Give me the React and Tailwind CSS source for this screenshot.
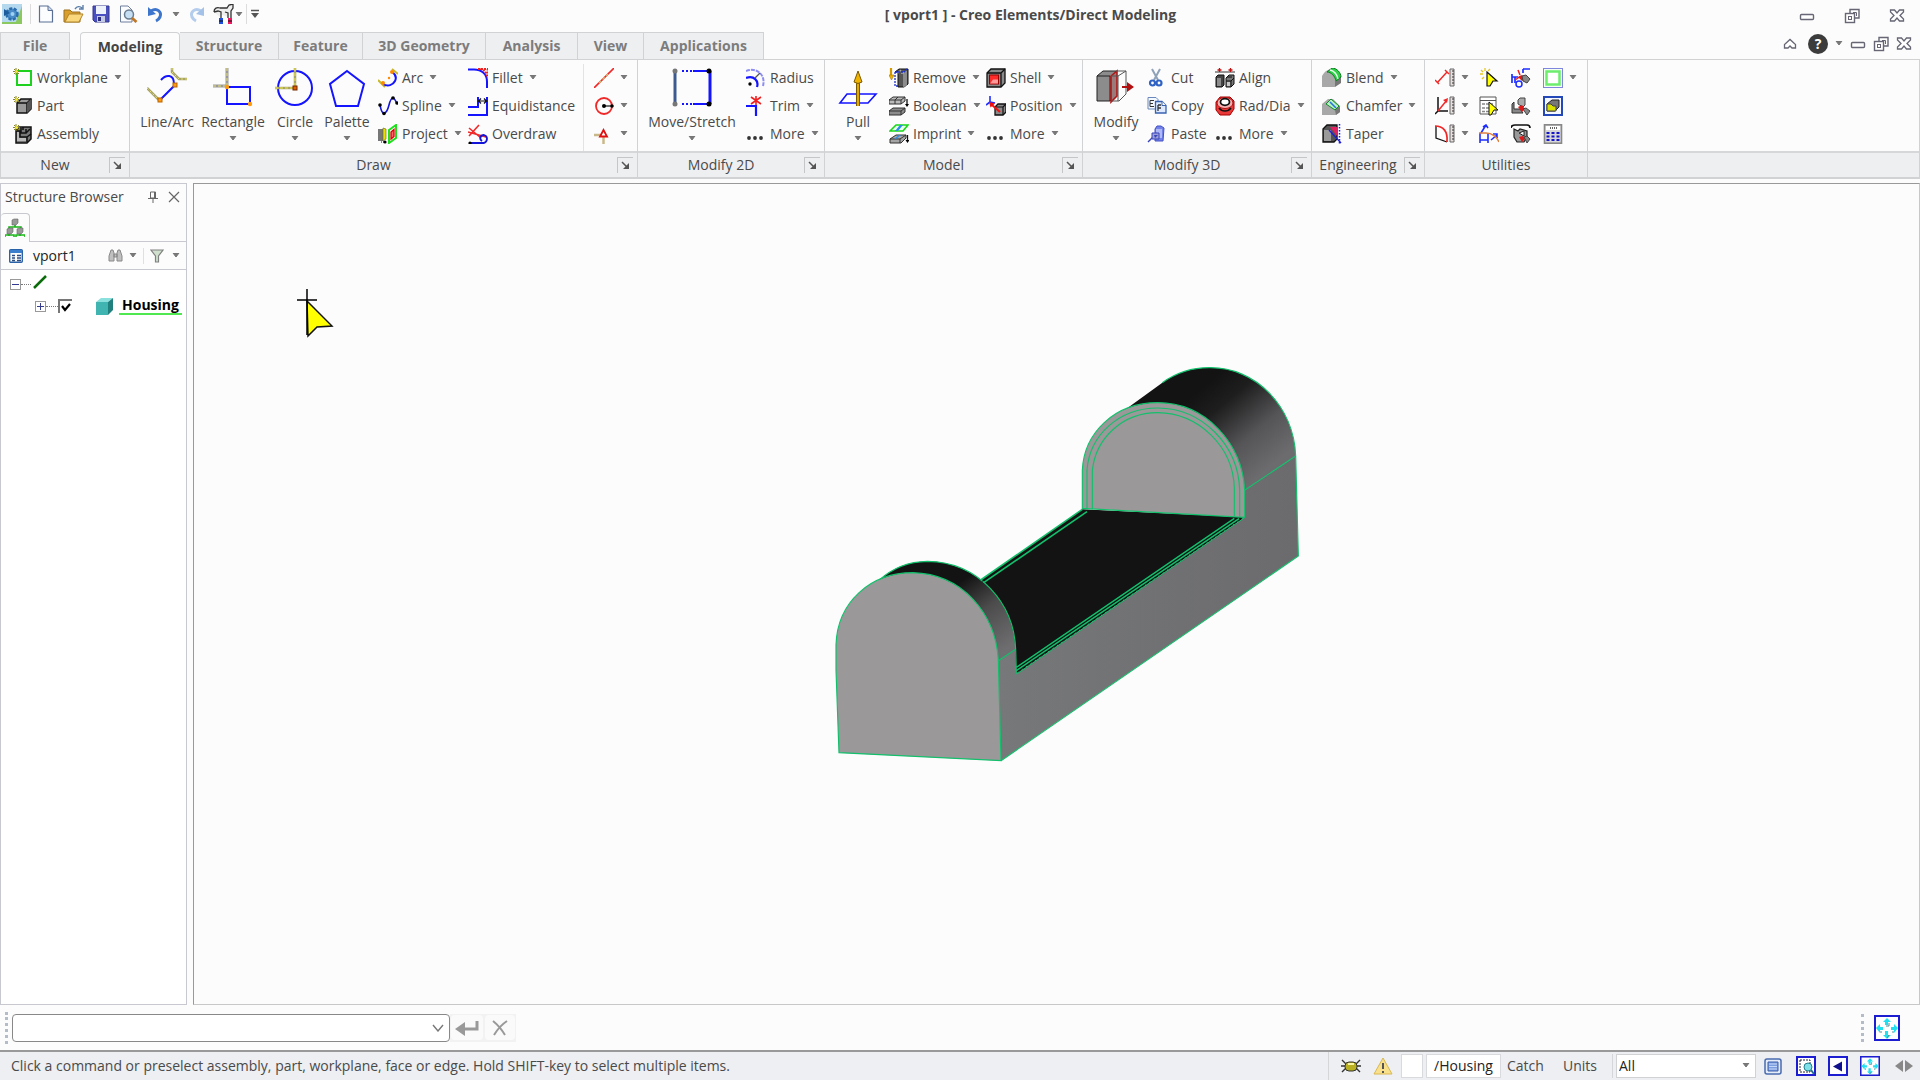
import { useState } from 'react';

// Small 20x20 ribbon drawings
const icons = {
  workplane: (
    <>
      <rect x="4" y="3" width="14" height="14" fill="none" stroke="#1fd11f" strokeWidth="2" />
      <path d="M3 0v7M0 3.5h7M1 1l5 5M6 1L1 6" stroke="#8a8420" strokeWidth="1" />
      <circle cx="3.5" cy="3.5" r="1.5" fill="#f2e93a" />
    </>
  ),
  part: (
    <>
      <path d="M4 7l4-4h10v10l-4 4H4z" fill="#9a9a9a" stroke="#111" strokeWidth="1.5" />
      <path d="M4 7h10v10M14 7l4-4" fill="none" stroke="#111" strokeWidth="1.5" />
      <path d="M14 7l4-4v10l-4 4z" fill="#555" />
      <path d="M3 0v7M0 3.5h7M1 1l5 5M6 1L1 6" stroke="#8a8420" strokeWidth="1" />
      <circle cx="3.5" cy="3.5" r="1.5" fill="#f2e93a" />
    </>
  ),
  assembly: (
    <>
      <path d="M3 6l3-3h12v12l-4 4H3z" fill="#777" stroke="#111" strokeWidth="1.5" />
      <path d="M3 7h4v6h7v5M8 4v5h5V5M13 9l4-4M14 13l4-3M10 3v3" fill="none" stroke="#111" strokeWidth="1.5" />
      <path d="M4 8h2v6h7v3H4z" fill="#bbb" />
      <path d="M3 0v7M0 3.5h7M1 1l5 5M6 1L1 6" stroke="#8a8420" strokeWidth="1" />
      <circle cx="3.5" cy="3.5" r="1.5" fill="#f2e93a" />
    </>
  ),
  arc: (
    <>
      <path d="M0 12l7 7M14 1l6 5" stroke="#c9b72c" strokeWidth="2" />
      <path d="M5 16c5 3 10 1 12-3s0-7-3-9" fill="none" stroke="#1414ff" strokeWidth="2" />
      <circle cx="5" cy="15" r="2" fill="#ff8a00" />
      <circle cx="14" cy="4" r="2" fill="#ff8a00" />
      <circle cx="11" cy="10" r="1.2" fill="#ff8a00" />
    </>
  ),
  spline: (
    <>
      <path d="M2 9c1 4 1 8 4 8s4-4 5-8 2-7 4-7 2 3 4 5" fill="none" stroke="#1414d8" strokeWidth="1.6" />
      <circle cx="2" cy="9" r="1.8" />
      <circle cx="6" cy="17.5" r="1.8" />
      <circle cx="15" cy="2" r="1.8" />
      <circle cx="19" cy="7" r="1.8" />
    </>
  ),
  project: (
    <>
      <path d="M0 5h5v12H0z" fill="#777" />
      <path d="M5 4l3 1v10l-3 2z" fill="#e8e000" stroke="#6b6700" strokeWidth=".6" />
      <path d="M11 6l7-5v13l-7 5z" fill="#fff" stroke="#1fe01f" strokeWidth="2" />
      <path d="M13 8l3-2.5v7L13 15z" fill="#f66" stroke="#d00" strokeWidth="1.3" />
      <path d="M3 18h6" stroke="#111" strokeDasharray="1 1" />
      <circle cx="7" cy="18" r="1.6" />
    </>
  ),
  fillet: (
    <>
      <path d="M0 1.5h6c8 0 13 5 13 12V20" fill="none" stroke="#1414ff" strokeWidth="2" />
      <path d="M10 1h9.500v9M12 1c4 1 6 3 7 7" fill="none" stroke="#f02020" strokeWidth="1.8" strokeDasharray="2 1" />
    </>
  ),
  equidistance: (
    <>
      <path d="M0 11h10V1M0 19h19V1" fill="none" stroke="#1414ff" strokeWidth="2" />
      <path d="M11 5h7M13 2.5l-2.5 2.5 2.5 2.5M16 2.5l2.5 2.5-2.5 2.5" fill="none" stroke="#111" strokeWidth="1.2" />
    </>
  ),
  overdraw: (
    <>
      <path d="M0 8l18 5M1 4l12 10M1 12L11 1" stroke="#f02828" strokeWidth="1.6" />
      <path d="M2 19h14c4-2 4-7 0-8-4 0-5 4-2 6" fill="none" stroke="#1414d8" strokeWidth="1.8" />
      <circle cx="2" cy="19" r="1.6" />
    </>
  ),
  geoLine: (
    <>
      <path d="M0 20L20 0" stroke="#f02828" strokeWidth="1.6" />
      <path d="M5 15L14 6" stroke="#d8b070" strokeWidth="1.6" strokeDasharray="3 2" />
    </>
  ),
  geoCircle: (
    <>
      <circle cx="10" cy="10" r="8" fill="none" stroke="#f02828" strokeWidth="1.8" />
      <path d="M10 10h8" stroke="#111" strokeWidth="1.2" />
      <circle cx="10" cy="10" r="2" />
      <circle cx="18" cy="10" r="1.8" />
    </>
  ),
  geoPoint: (
    <>
      <path d="M0 11h9M9.5 12v8" stroke="#c9b98a" strokeWidth="2.5" />
      <path d="M9.500 6l3.500 6.500H6z" fill="#fff" stroke="#e01010" strokeWidth="1.8" />
    </>
  ),
  radius: (
    <>
      <path d="M0 3C10-1 20 6 17 18" fill="none" stroke="#8c8cf4" strokeWidth="2" strokeDasharray="4 1" />
      <path d="M0 10c8-3 13 3 11 9" fill="none" stroke="#1414ff" strokeWidth="2.2" />
      <path d="M9 10l5-5" stroke="#555" strokeWidth="1.2" />
      <circle cx="4" cy="16" r="1.7" />
    </>
  ),
  trim: (
    <>
      <path d="M0 10h10v10" fill="none" stroke="#1414ff" strokeWidth="2.2" />
      <path d="M10 0v9M5 1l10 7M15 1L5 8" stroke="#f02020" strokeWidth="1.6" />
    </>
  ),
  more: (
    <>
      <circle cx="3" cy="14" r="1.9" fill="#333" />
      <circle cx="9" cy="14" r="1.9" fill="#333" />
      <circle cx="15" cy="14" r="1.9" fill="#333" />
    </>
  ),
  remove: (
    <>
      <path d="M6 4l4-3h9v15l-4 3H9V4z" fill="#555" stroke="#111" />
      <path d="M9 5l3-3M12 5h3v14M17 3v15" stroke="#aaa" strokeWidth="1.3" fill="none" />
      <path d="M6 4h9l3-3M6 4v14h4" fill="none" stroke="#1a2ec8" strokeWidth="1.3" strokeDasharray="2 1" />
      <path d="M2 0v9" stroke="#d39a00" strokeWidth="2.2" />
      <path d="M0 7h5l-2.5 5z" fill="#f0b400" stroke="#a87500" strokeWidth=".6" />
    </>
  ),
  boolean: (
    <>
      <path d="M0 4l4-3h12v4l-4 3H0z" fill="#bbb" stroke="#333" />
      <path d="M0 4h12l4-3M6 8V4l3-3M12 4v4" fill="none" stroke="#333" />
      <path d="M0 15l4-3h12v4l-4 3H0z" fill="#8c8c8c" stroke="#333" />
      <path d="M0 15h12l4-3M12 15v4" fill="none" stroke="#333" />
      <path d="M18 3v6" stroke="#111" strokeWidth="1.3" />
      <path d="M16 8h4l-2 3z" />
    </>
  ),
  imprint: (
    <>
      <path d="M1 7l6-6h12l-5 6z" fill="#eaffea" stroke="#19d819" strokeWidth="1.6" />
      <path d="M6 7l5-6h3L9 7z" fill="#2a8cf0" />
      <path d="M1 15l6-4h10v3l-5 5H1z" fill="#a5a5a5" stroke="#333" />
      <path d="M1 15h10l6-4M11 15v4" fill="none" stroke="#333" />
      <path d="M5 15l5-4h2l-5 4z" fill="#2a8cf0" />
      <path d="M18.5 11v6" stroke="#111" strokeWidth="1.3" />
      <path d="M16.5 16h4l-2 3z" />
    </>
  ),
  shell: (
    <>
      <path d="M1 5l4-4h14v14l-4 4H1z" fill="#8a8a8a" stroke="#111" strokeWidth="1.3" />
      <path d="M1 5h14v14M15 5l4-4" fill="none" stroke="#111" strokeWidth="1.3" />
      <rect x="3.5" y="7" width="9" height="9" fill="#ff2a2a" stroke="#900" />
      <path d="M4 15.5l3-4h5v4z" fill="#ff9a9a" />
    </>
  ),
  position: (
    <>
      <path d="M4 0v6L0 9M4 6l5 1" fill="none" stroke="#1e2eff" strokeWidth="1.6" />
      <path d="M9 11l3-3h8v8l-3 3H9z" fill="#8a8a8a" stroke="#111" strokeWidth="1.3" />
      <path d="M9 11h8v8M17 11l3-3" fill="none" stroke="#111" strokeWidth="1.2" />
      <path d="M14 16L6 9" stroke="#f01010" strokeWidth="2" />
      <path d="M3 6l6 1.5-4.5 4z" fill="#f01010" />
    </>
  ),
  cut: (
    <>
      <path d="M5 1l6 11M13 1L7 12" stroke="#8fa2b8" strokeWidth="2" />
      <circle cx="5.500" cy="15" r="2.500" fill="none" stroke="#2f62c4" strokeWidth="2.200" />
      <circle cx="12" cy="15" r="2.500" fill="none" stroke="#2f62c4" strokeWidth="2.200" />
    </>
  ),
  copy: (
    <>
      <path d="M1 1.500h8l2 2V13H1z" fill="#f4f8ff" stroke="#6b87bc" />
      <path d="M3 4.500h4M3 4.500v6M3 7.500h3M3 10.500h4" stroke="#333" />
      <path d="M8.500 5.500H15l4 4V17H8.500z" fill="#dce9ff" stroke="#3862b0" strokeWidth="1.300" />
      <path d="M15 5.500v4h4" fill="#fff" stroke="#3862b0" />
      <path d="M11 9h3M11 9v6M11 12h3" stroke="#333" strokeWidth="1.300" />
    </>
  ),
  paste: (
    <>
      <path d="M8 5l2-3h4l3 2-1 13H8z" fill="#7282e8" stroke="#4250c8" />
      <path d="M9 5h6v9H9z" fill="#aeb9f6" />
      <path d="M1 18l9-9" stroke="#3a44b8" strokeWidth="1.500" />
      <path d="M5 9h7v6H5z" fill="#9a9fd8" stroke="#3a44b8" />
      <path d="M7 11h4l-3 3z" fill="#3a44b8" />
    </>
  ),
  align: (
    <>
      <path d="M0 4h20" stroke="#333" />
      <path d="M4.5 0v4M2.5 2h4M15.5 0v4M13.5 2h4" stroke="#c01010" strokeWidth="1.3" />
      <path d="M1 9l2-2h6v10l-2 2H1z" fill="#444" stroke="#111" />
      <path d="M2 10h4v8H2z" fill="#8c8c8c" />
      <path d="M11 13v-3l3-3h5v9l-3 3h-5z" fill="#777" stroke="#111" />
      <path d="M11 13h5v6M12 9h5M16 13l3-3" fill="none" stroke="#111" />
      <path d="M12 14h3v4h-3z" fill="#c8c8c8" />
    </>
  ),
  radDia: (
    <>
      <path d="M1 6l4-5h10l4 4v8l-4 6H5l-4-5z" fill="#e83838" stroke="#a00" />
      <ellipse cx="10" cy="7" rx="8" ry="5.5" fill="#f6b0b0" stroke="#b01010" />
      <ellipse cx="10" cy="6" rx="4.5" ry="3.3" fill="#fff" stroke="#111" strokeWidth="1.7" />
      <path d="M4 12c3 4 9 4 12 0" fill="none" stroke="#111" strokeWidth="1.5" />
    </>
  ),
  blend: (
    <>
      <path d="M0 8c3-5 6-7 10-7s8 3 9 8l-6 4v6H0z" fill="#a8a8a8" />
      <path d="M13 13l6-4v6l-6 4z" fill="#777" />
      <path d="M5 4c4 0 8 4 9 9l5-4c0-4-4-9-9-9z" fill="#2fd048" stroke="#0c7c20" />
      <path d="M8 2c4 1 7 4 8 9" stroke="#eafff0" strokeWidth="1.3" fill="none" />
    </>
  ),
  chamfer: (
    <>
      <path d="M0 8l6-5h5l7 7v6l-4 3H0z" fill="#a8a8a8" />
      <path d="M13 14l5-4v6l-4 3z" fill="#777" />
      <path d="M4 8l5-5 8 7-4 4z" fill="#b8f4c0" stroke="#138a28" />
      <path d="M8 6l6 6" stroke="#2770e0" strokeWidth="1.6" />
    </>
  ),
  taper: (
    <>
      <path d="M1 5l4-4h10v14l-3 3H1z" fill="#555" stroke="#111" strokeWidth="1.3" />
      <path d="M2 6h7v11H2z" fill="#9a9a9a" />
      <path d="M8 3h7v9z" fill="#e02060" />
      <path d="M17.5 0v20" stroke="#1e1ed8" strokeDasharray="1.5 1.5" strokeWidth="1.5" />
      <path d="M7 6l12 13" stroke="#1e1ed8" strokeWidth="1.4" />
    </>
  ),
  measureLength: (
    <>
      <path d="M2 15L12 4M0 12l4 4M10 2l4 4" stroke="#f02828" strokeWidth="1.5" />
      <path d="M15 1h4v17h-4z" fill="#e9dede" stroke="#666" />
      <path d="M17 3h2M17 6h2M17 9h2M17 12h2M17 15h2" stroke="#333" />
    </>
  ),
  measureAngle: (
    <>
      <path d="M3 1v14h10M3 15L0 18" fill="none" stroke="#111" strokeWidth="1.5" />
      <path d="M3 15L12 4" stroke="#f02828" strokeWidth="1.5" />
      <path d="M13 2l-1 5-4-3z" fill="#f02828" />
      <path d="M15 1h4v17h-4z" fill="#e9dede" stroke="#666" />
      <path d="M17 3h2M17 6h2M17 9h2M17 12h2M17 15h2" stroke="#333" />
    </>
  ),
  measureArc: (
    <>
      <path d="M1 2v12l11 4" fill="none" stroke="#111" strokeWidth="1.3" />
      <path d="M0 2c8 0 13 5 12 16" fill="none" stroke="#f02828" strokeWidth="1.7" />
      <path d="M15 1h4v17h-4z" fill="#e9dede" stroke="#666" />
      <path d="M17 3h2M17 6h2M17 9h2M17 12h2M17 15h2" stroke="#333" />
    </>
  ),
  select: (
    <>
      <path d="M6 0v3M1 6h3M2 2l2 2M11 1L9 3M3 11l2-2" stroke="#e6c820" strokeWidth="1.3" />
      <path d="M8 4l10 9h-4l-3 5H8z" fill="#ffff00" stroke="#111" strokeWidth="1.2" />
    </>
  ),
  selectList: (
    <>
      <path d="M1 1h16v17H1z" fill="#fff" stroke="#555" />
      <path d="M1 4.500h16" stroke="#555" />
      <path d="M3 8h12M3 12h12M3 15.500h12" stroke="#888" strokeWidth="1.500" strokeDasharray="3 1" />
      <path d="M10 6l9 8h-4l-3 5h-2z" fill="#ffff00" stroke="#111" />
    </>
  ),
  inspect2d: (
    <>
      <path d="M1 6v9M4 9v6M1 9h6M12 1h7M12 1v4" stroke="#1e2eff" strokeWidth="1.7" fill="none" />
      <path d="M7 2l2 5M4 12l6-4" stroke="#f02020" strokeWidth="1.5" />
      <circle cx="8" cy="16" r="3" fill="none" stroke="#1e2eff" strokeWidth="1.5" />
      <path d="M7 9l4-2 3 4-3 2z" fill="#e01818" />
      <path d="M11 8l4-1 4 4-3 4-4-2z" fill="#888" stroke="#444" />
    </>
  ),
  inspect3d: (
    <>
      <path d="M1 8l2-2v7h6l3 4H1z" fill="#888" stroke="#333" />
      <path d="M7 4l2-2h5v7l-2 2-5-3z" fill="#aaa" stroke="#444" />
      <path d="M7 11l4-2 3 4-3 3z" fill="#e01818" />
      <path d="M12 13l3-1 4 3-3 4z" fill="#888" stroke="#444" />
    </>
  ),
  inspectAll: (
    <>
      <path d="M0 4c0-2 2-3 4-3h12c2 0 3 1 3 3" fill="none" stroke="#111" strokeWidth="1.7" />
      <path d="M3 5l4 2 2-2 7 2v6l-3 5H6l-3-5z" fill="#999" stroke="#222" strokeWidth="1.2" />
      <path d="M8 9l5-2v5z" fill="#fff" stroke="#222" />
      <path d="M8 13l4-1 2 3-3 3z" fill="#e01818" />
      <path d="M13 13l3-1 3 3-3 4z" fill="#888" stroke="#444" />
    </>
  ),
  dimension: (
    <>
      <path d="M1 9v10M9 9v10M1 16h8M12 16l6-5M14 10h4v4M2 9l5-8M4 3l3-2 2 3" fill="none" stroke="#1e2eff" strokeWidth="1.6" />
      <path d="M0 9h7c6 0 11 4 13 9" fill="none" stroke="#e08040" strokeWidth="1.5" />
    </>
  ),
  frame: (
    <>
      <rect x=".5" y=".5" width="19" height="19" fill="#f2fff2" stroke="#8086dd" />
      <rect x="3.5" y="3.5" width="13" height="13" fill="#fff" stroke="#6cee6c" strokeWidth="2.5" />
    </>
  ),
  solidView: (
    <>
      <rect x="1" y="1" width="18" height="18" fill="#f6f8ff" stroke="#2448b8" strokeWidth="2" />
      <path d="M4 8l5-4h7v7l-4 4H4z" fill="#777" stroke="#222" />
      <path d="M4 8h4l2 2h3v5H4z" fill="#d8e000" stroke="#444" />
    </>
  ),
  calculator: (
    <>
      <rect x="1.500" y=".8" width="17" height="18.400" fill="#d7d7d7" stroke="#888" strokeWidth="1.6" />
      <path d="M3 2h14v4H3z" fill="#fff" />
      <path d="M7 4h8" stroke="#333" strokeWidth="1.3" strokeDasharray="1 1" />
      <path d="M3.500 9h13M3.500 12.500h13M3.500 16h13" stroke="#1414c8" strokeWidth="2" strokeDasharray="3 2" />
    </>
  ),
};

function Icon({ name }) {
  return (
    <svg viewBox="0 0 20 20" className="h-5 w-5 shrink-0" aria-hidden="true">
      {icons[name]}
    </svg>
  );
}

// Large 40x40 ribbon drawings
const bigIcons = {
  lineArc: (
    <>
      <path d="M14 12c5-6 13-6 13 4v2L13 32" fill="none" stroke="#1414ff" strokeWidth="2" />
      <path d="M0 20l12 12M25 0v4l7 7h8" fill="none" stroke="#a8a468" strokeWidth="2.5" />
      <path d="M0 20l12 12M25 0v4l7 7h8" fill="none" stroke="#e8e070" strokeDasharray="2 2" />
      <rect x="11" y="30" width="4" height="4" fill="#ff9a10" stroke="#b86400" />
      <rect x="26" y="15" width="4" height="4" fill="#ff9a10" stroke="#b86400" />
    </>
  ),
  rectangle: (
    <>
      <path d="M14 0v18M0 18h14" stroke="#999" strokeWidth="3" />
      <path d="M14 0v18M0 18h14" stroke="#e8e070" strokeDasharray="3 2" />
      <rect x="14" y="19" width="23" height="17" fill="none" stroke="#1414ff" strokeWidth="2" />
      <circle cx="14" cy="19" r="2.2" fill="#ff9a10" />
      <circle cx="37" cy="36" r="2.2" fill="#ff9a10" />
    </>
  ),
  circle: (
    <>
      <circle cx="20" cy="20" r="17" fill="none" stroke="#1414ff" strokeWidth="2" />
      <path d="M20 0v20M0 20h20" stroke="#a8a468" strokeWidth="2.5" />
      <path d="M20 0v20M0 20h20" stroke="#f0e840" strokeDasharray="3 2" />
      <rect x="18" y="18" width="4" height="4" fill="#e06000" stroke="#702800" />
    </>
  ),
  palette: <path d="M20 3l17 13-6 22H9L3 16z" fill="none" stroke="#1414ff" strokeWidth="2" />,
  move: (
    <>
      <path d="M3 3v33" stroke="#3c5a90" strokeWidth="3" />
      <path d="M38 3v33" stroke="#1414ff" strokeWidth="3" />
      <path d="M10 3h10M10 36h10" stroke="#1414ff" strokeWidth="2" strokeDasharray="2 2" />
      <path d="M21 3h17M21 36h17" stroke="#1414ff" strokeWidth="2" />
      <circle cx="3" cy="3" r="2.5" fill="#777" />
      <circle cx="3" cy="36" r="2.5" fill="#777" />
      <circle cx="37" cy="3" r="2.5" />
      <circle cx="37" cy="36" r="2.5" />
    </>
  ),
  pull: (
    <>
      <path d="M9 26h29l-8 9H2z" fill="#fff" stroke="#1414ff" strokeWidth="1.6" />
      <path d="M20 8v30" stroke="#7a5800" strokeWidth="4" />
      <path d="M20 8v30" stroke="#e0a800" strokeWidth="2" />
      <path d="M20 3l4 11q-4 3-8 0z" fill="#f0b400" stroke="#7a5800" />
    </>
  ),
  modify: (
    <>
      <path d="M1 8l6-5h13v24l-6 6H1z" fill="#8c8c8c" stroke="#222" />
      <path d="M1 8h13v25" fill="none" stroke="#222" />
      <path d="M15 8l6-5v25l-6 6z" fill="#9a7a7a" stroke="#b01818" strokeWidth="1.6" />
      <path d="M20 3h10v23l-7 7h-8M22 8v25M22 8l8-5M15 8h7" fill="none" stroke="#555" />
      <path d="M26 19h7" stroke="#b01010" strokeWidth="2" />
      <path d="M31 14l7 5-7 5z" fill="#b01010" />
    </>
  ),
};

function Caret({ className = '' }) {
  return (
    <svg viewBox="0 0 8 5" className={`h-[5px] w-2 shrink-0 ${className}`} aria-hidden="true">
      <path d="M1 0h6L4 4z" fill="#777" stroke="#777" />
    </svg>
  );
}

function BigButton({ icon, label, caret, className }) {
  return (
    <button className={`flex flex-col items-center pt-1 ${className}`}>
      <svg viewBox="0 0 40 40" className="h-10 w-10" aria-hidden="true">
        {bigIcons[icon]}
      </svg>
      <span className="mt-1 leading-5 whitespace-nowrap">{label}</span>
      {caret && <Caret className="mt-1" />}
    </button>
  );
}

function SmallButton({ icon, label, caret }) {
  return (
    <button className="flex h-[27px] items-center gap-1 whitespace-nowrap">
      <Icon name={icon} />
      <span>{label}</span>
      {caret && <Caret className="ml-0.5" />}
    </button>
  );
}

function Column({ items, className = '' }) {
  return (
    <div className={`flex flex-col items-start gap-px ${className}`}>
      {items.map(([icon, label, caret]) => (
        <SmallButton key={icon + label} icon={icon} label={label} caret={caret} />
      ))}
    </div>
  );
}

function IconColumn({ items, className = '' }) {
  return (
    <div className={`flex flex-col items-start gap-px ${className}`}>
      {items.map(([icon, label, caret]) => (
        <button key={icon} aria-label={label} className="flex h-[27px] items-center gap-1.5">
          <Icon name={icon} />
          {caret && <Caret />}
        </button>
      ))}
    </div>
  );
}

function Group({ title, launcher = true, className = '', children }) {
  return (
    <section className={`flex shrink-0 flex-col border-r border-[#d0d2d4] ${className}`}>
      <div className="flex h-[91px] pt-1">{children}</div>
      <div className="flex h-[26px] items-center border-t-2 border-[#d6d7d9] bg-[#eeeff1]">
        <h2 className="flex-1 text-center whitespace-nowrap">{title}</h2>
        {launcher && (
          <button aria-label={`${title} options`} className="mr-1 h-4 w-4 border-t border-l border-[#c4c6c8]">
            <svg viewBox="0 0 15 15" className="h-[15px] w-[15px]" aria-hidden="true">
              <path d="M4 4l5 5" stroke="#555" strokeWidth="1.5" />
              <path d="M11 5v6H5z" fill="#555" />
            </svg>
          </button>
        )}
      </div>
    </section>
  );
}

function Ribbon() {
  return (
    <div className="flex border-b-2 border-l border-[#d0d2d4]">
      <Group title="New" className="w-[129px]">
        <Column
          className="pl-3"
          items={[['workplane', 'Workplane', true], ['part', 'Part'], ['assembly', 'Assembly']]}
        />
      </Group>
      <Group title="Draw" className="w-[508px]">
        <BigButton icon="lineArc" label="Line/Arc" className="ml-1 w-[66px]" />
        <BigButton icon="rectangle" label="Rectangle" caret className="w-[66px]" />
        <BigButton icon="circle" label="Circle" caret className="w-[58px]" />
        <BigButton icon="palette" label="Palette" caret className="w-[46px]" />
        <Column
          className="ml-2 w-[90px]"
          items={[['arc', 'Arc', true], ['spline', 'Spline', true], ['project', 'Project', true]]}
        />
        <Column
          className="w-[115px]"
          items={[['fillet', 'Fillet', true], ['equidistance', 'Equidistance'], ['overdraw', 'Overdraw']]}
        />
        <IconColumn
          className="border-l border-[#e2e3e5] pl-2.5"
          items={[['geoLine', 'Construction line', true], ['geoCircle', 'Construction circle', true], ['geoPoint', 'Construction point', true]]}
        />
      </Group>
      <Group title="Modify 2D" className="w-[187px]">
        <BigButton icon="move" label="Move/Stretch" caret className="ml-2 w-[92px]" />
        <Column
          className="ml-2"
          items={[['radius', 'Radius'], ['trim', 'Trim', true], ['more', 'More', true]]}
        />
      </Group>
      <Group title="Model" className="w-[258px]">
        <BigButton icon="pull" label="Pull" caret className="ml-2 w-[50px]" />
        <Column
          className="ml-1.5 w-[97px]"
          items={[['remove', 'Remove', true], ['boolean', 'Boolean', true], ['imprint', 'Imprint', true]]}
        />
        <Column items={[['shell', 'Shell', true], ['position', 'Position', true], ['more', 'More', true]]} />
      </Group>
      <Group title="Modify 3D" className="w-[229px]">
        <BigButton icon="modify" label="Modify" caret className="ml-2 w-[50px]" />
        <Column className="ml-1.5 w-[68px]" items={[['cut', 'Cut'], ['copy', 'Copy'], ['paste', 'Paste']]} />
        <Column items={[['align', 'Align'], ['radDia', 'Rad/Dia', true], ['more', 'More', true]]} />
      </Group>
      <Group title="Engineering" className="w-[113px]">
        <Column
          className="ml-2.5"
          items={[['blend', 'Blend', true], ['chamfer', 'Chamfer', true], ['taper', 'Taper']]}
        />
      </Group>
      <Group title="Utilities" launcher={false} className="w-[163px]">
        <IconColumn
          className="ml-2.5 w-11"
          items={[['measureLength', 'Measure length', true], ['measureAngle', 'Measure angle', true], ['measureArc', 'Measure arc', true]]}
        />
        <IconColumn
          className="w-8"
          items={[['select', 'Select'], ['selectList', 'Select list'], ['dimension', 'Dimension']]}
        />
        <IconColumn
          className="w-8"
          items={[['inspect2d', 'Check 2D'], ['inspect3d', 'Check 3D'], ['inspectAll', 'Check all']]}
        />
        <IconColumn
          items={[['frame', 'Frame', true], ['solidView', 'Solid view'], ['calculator', 'Calculator']]}
        />
      </Group>
      <div className="flex flex-1 flex-col border-r border-[#d0d2d4]">
        <div className="h-[91px]" />
        <div className="h-[26px] border-t-2 border-[#d6d7d9] bg-[#eeeff1]" />
      </div>
    </div>
  );
}

function MinimizeIcon() {
  return (
    <svg viewBox="0 0 16 16" className="h-4 w-4" aria-hidden="true">
      <rect x="1.5" y="6.5" width="13" height="5" rx="1" fill="#fff" stroke="#666674" strokeWidth="1.4" />
    </svg>
  );
}

function RestoreIcon() {
  return (
    <svg viewBox="0 0 16 16" className="h-4 w-4" aria-hidden="true">
      <path d="M6 5V1.500h9V10h-4" fill="#fff" stroke="#666674" strokeWidth="1.4" />
      <path d="M9 4.500h3.500V8" fill="none" stroke="#666674" />
      <rect x="1.5" y="5.5" width="9" height="9" fill="#fff" stroke="#666674" strokeWidth="1.4" />
      <rect x="4.5" y="8.5" width="3" height="3" fill="none" stroke="#666674" />
    </svg>
  );
}

function CloseIcon() {
  return (
    <svg viewBox="0 0 16 16" className="h-4 w-4" aria-hidden="true">
      <path
        d="M1.500 2h4L8 5l2.500-3h4v2L11 7.500l3.500 3.500v2h-4L8 10l-2.500 3h-4v-2L5 7.500 1.500 4z"
        fill="#fff"
        stroke="#666674"
        strokeWidth="1.3"
      />
    </svg>
  );
}

function TitleBar() {
  return (
    <header className="flex h-8 items-center">
      <div className="flex w-[262px] shrink-0 items-center pb-1 pl-[2px]">
        <svg viewBox="0 0 20 20" className="h-5 w-5" aria-hidden="true">
          <rect width="20" height="20" fill="#b4d8ee" />
          <path d="M13 20h7V2z" fill="#8cc860" />
          <path d="M0 18h20v2H0z" fill="#8cc860" />
          <circle cx="10" cy="10" r="5.5" fill="#4a8cc8" stroke="#2a6cac" strokeWidth="2.5" strokeDasharray="3 1.5" />
          <path d="M2 5l6 4-6 3z" fill="#1c5c9c" />
          <circle cx="10.5" cy="10" r="2" fill="#9ed0f0" />
        </svg>
        <span className="ml-2 h-5 w-px bg-[#dcdcdc]" />
        <button aria-label="New" className="ml-[7px]">
          <svg viewBox="0 0 16 18" className="h-[18px] w-4" aria-hidden="true">
            <path d="M1.5 1H10l4.500 4.500V17h-13z" fill="#fbfdff" stroke="#5a6f94" strokeWidth="1.2" />
            <path d="M10 1v4.500h4.500" fill="#ccd8ec" stroke="#5a6f94" />
          </svg>
        </button>
        <button aria-label="Open" className="ml-[9px]">
          <svg viewBox="0 0 22 18" className="h-[18px] w-[22px]" aria-hidden="true">
            <path d="M1 17V5h6l2 2h8v10z" fill="#d99e2c" stroke="#9a7020" />
            <path d="M2 17l4-8h14l-4 8z" fill="#fbd77c" stroke="#b08428" />
            <path d="M12 4c2-3 5-3 7-1M20 0v4h-4" fill="none" stroke="#5a7ba8" strokeWidth="1.4" />
          </svg>
        </button>
        <button aria-label="Save" className="ml-[7px]">
          <svg viewBox="0 0 18 18" className="h-[18px] w-[18px]" aria-hidden="true">
            <path d="M1 1h16v16H3l-2-2z" fill="#4b50c0" stroke="#34388e" />
            <path d="M4 1h10v8H4z" fill="#eef2fb" />
            <path d="M5 11h8v6H5z" fill="#c4cae4" />
            <path d="M6 12h3v4H6z" fill="#2b2f7c" />
          </svg>
        </button>
        <button aria-label="Print preview" className="ml-[9px]">
          <svg viewBox="0 0 19 18" className="h-[18px] w-[19px]" aria-hidden="true">
            <path d="M1.500 1H9l4 4v12H1.500z" fill="#fafcff" stroke="#6f7f9c" />
            <circle cx="10" cy="9.5" r="4.5" fill="#c6dff2" stroke="#6a7c90" strokeWidth="1.5" />
            <path d="M13 13l4.500 4" stroke="#c07828" strokeWidth="2.8" />
          </svg>
        </button>
        <button aria-label="Undo" className="ml-[9px] flex items-center gap-2">
          <svg viewBox="0 0 17 17" className="h-[17px] w-[17px]" aria-hidden="true">
            <path d="M4 5c6-4 11 1 9 6-1 2-2 3-4 4" fill="none" stroke="#3d74cc" strokeWidth="3" />
            <path d="M1 1v9l8-2z" fill="#3d74cc" />
          </svg>
          <Caret />
        </button>
        <button aria-label="Redo" className="ml-2">
          <svg viewBox="0 0 17 17" className="h-[17px] w-[17px]" aria-hidden="true">
            <path d="M13 5C7 1 2 6 4 11c1 2 2 3 4 4" fill="none" stroke="#b4cdec" strokeWidth="3" />
            <path d="M16 1v9L8 8z" fill="#a4c2e8" />
          </svg>
        </button>
        <button aria-label="Tools" className="ml-2 flex items-center">
          <svg viewBox="0 0 22 20" className="h-5 w-[22px]" aria-hidden="true">
            <path d="M1 8c0-4 3-5 6-4h7l2-3 4-1v4l-2 3v7M1 8l4-1 3 1v6M12 8l3 1v5" fill="#eee" stroke="#333" strokeWidth="1.3" />
            <path d="M6 14h4v6H6z" fill="#1e50e0" />
            <path d="M15 14h4v6h-4z" fill="#f01860" />
            <path d="M6 17h4M15 17h4" stroke="#111" />
          </svg>
          <Caret />
        </button>
        <span className="ml-[3px] h-5 w-px bg-[#dcdcdc]" />
        <button aria-label="Customize" className="ml-1">
          <svg viewBox="0 0 8 10" className="h-[10px] w-2" aria-hidden="true">
            <path d="M0 1.500h8" stroke="#555" strokeWidth="1.5" />
            <path d="M0 4h8L4 9z" fill="#555" />
          </svg>
        </button>
      </div>
      <h1 className="flex-1 pb-0.5 text-center font-bold text-[#4a4a4a]">[ vport1 ] - Creo Elements/Direct Modeling</h1>
      <div className="flex shrink-0 items-center gap-[29px] pr-[15px]">
        <button aria-label="Minimize"><MinimizeIcon /></button>
        <button aria-label="Restore"><RestoreIcon /></button>
        <button aria-label="Close"><CloseIcon /></button>
      </div>
    </header>
  );
}

const tabs = [
  ['Modeling', 'w-[100px]'],
  ['Structure', 'w-[99px]'],
  ['Feature', 'w-[84px]'],
  ['3D Geometry', 'w-[123px]'],
  ['Analysis', 'w-[92px]'],
  ['View', 'w-[66px]'],
  ['Applications', 'w-[120px]'],
];

function TabBar({ active, onSelect }) {
  return (
    <nav className="flex h-7 items-stretch border-b border-[#d0d2d4] font-bold text-[#7c7c7c]">
      <button className="mr-[10px] w-[70px] border border-b-0 border-[#d0d2d4] bg-[#eeeff1]">File</button>
      {tabs.map(([name, width]) =>
        name === active ? (
          <button
            key={name}
            onClick={() => onSelect(name)}
            className={`-mb-px rounded-t border border-b-0 border-[#d0d2d4] bg-[#fcfcfc] text-[#444] ${width}`}
          >
            {name}
          </button>
        ) : (
          <button
            key={name}
            onClick={() => onSelect(name)}
            className={`border-t border-r border-[#d0d2d4] bg-[#eeeff1] ${width}`}
          >
            {name}
          </button>
        )
      )}
      <div className="ml-auto flex items-center pr-2 pb-1">
        <button aria-label="Collapse ribbon">
          <svg viewBox="0 0 14 12" className="h-3 w-[14px]" aria-hidden="true">
            <path d="M1.500 10V6.500L7 1.500l5.500 5V10H9L7 8l-2 2z" fill="#fff" stroke="#666674" strokeWidth="1.3" />
          </svg>
        </button>
        <button aria-label="Help" className="ml-[11px] flex h-5 w-5 items-center justify-center rounded-full bg-[#3c3c3c] text-white">
          ?
        </button>
        <Caret className="mx-[7px]" />
        <button aria-label="Minimize window"><MinimizeIcon /></button>
        <button aria-label="Restore window" className="mx-[7px]"><RestoreIcon /></button>
        <button aria-label="Close window"><CloseIcon /></button>
      </div>
    </nav>
  );
}

function Sidebar() {
  const [visible, setVisible] = useState(true);

  return (
    <aside className="flex w-[187px] shrink-0 flex-col border border-[#c8c9d0]">
      <div className="flex h-[29px] items-center pb-1 pl-1">
        <h2 className="flex-1 whitespace-nowrap">Structure Browser</h2>
        <button aria-label="Pin">
          <svg viewBox="0 0 10 12" className="h-3 w-[10px]" aria-hidden="true">
            <path d="M2.5 1h5v6h-5zM0 7.500h10M5 8v4M6.500 1v6" fill="none" stroke="#666" />
          </svg>
        </button>
        <button aria-label="Close panel" className="mr-1.5 ml-2.5">
          <svg viewBox="0 0 12 12" className="h-3 w-3" aria-hidden="true">
            <path d="M1 1l10 10M11 1L1 11" stroke="#666" strokeWidth="1.2" />
          </svg>
        </button>
      </div>
      <div className="flex h-[29px]">
        <button aria-label="Structure" className="flex w-[29px] items-center justify-center rounded-t border-t border-r border-[#c8c9d0]">
          <svg viewBox="0 0 20 20" className="h-5 w-5" aria-hidden="true">
            <path d="M10 6v3M4 12V9h12v3M0 19v-2h9v2M11 19v-2h9v2M4 15v3M15 15v3" fill="none" stroke="#18b818" strokeWidth="1.6" />
            <path d="M7 2l2-1h4v4l-2 2H7zM2 11l2-1h4v4l-2 2H2zM12 11l2-1h4v4l-2 2h-4z" fill="#999" stroke="#666" strokeWidth=".6" />
          </svg>
        </button>
        <div className="flex-1 border-b border-[#c8c9d0]" />
      </div>
      <div className="flex h-7 items-center border-b border-[#c8c9d0] pr-1.5 pl-2 text-[#222]">
        <svg viewBox="0 0 14 14" className="h-[14px] w-[14px]" aria-hidden="true">
          <rect x=".7" y=".7" width="12.6" height="12.6" rx="1" fill="#fff" stroke="#2a62a8" strokeWidth="1.4" />
          <path d="M1 1h12v3H1z" fill="#3a80cc" />
          <path d="M3 6.500h3M3 9h3M3 11.500h3M8 6.500h4M8 9h4M8 11.500h4" stroke="#2a4c80" strokeWidth="1.3" />
        </svg>
        <span className="ml-2.5 flex-1">vport1</span>
        <button aria-label="Find" className="flex items-center gap-1.5">
          <svg viewBox="0 0 15 13" className="h-[13px] w-[15px]" aria-hidden="true">
            <path d="M3 1h2l1 3v8H1V7zM10 1h2l2 6v5H9V4zM6 5h3v3H6z" fill="#c0c0c0" stroke="#888" />
          </svg>
          <Caret />
        </button>
        <span className="mx-1.5 h-4 w-px bg-[#e0e0e0]" />
        <button aria-label="Filter" className="flex items-center gap-2">
          <svg viewBox="0 0 14 14" className="h-[14px] w-[14px]" aria-hidden="true">
            <path d="M1 1h12L8.500 7v6h-3V7z" fill="#cfe0cc" stroke="#808080" strokeWidth="1.2" />
          </svg>
          <Caret />
        </button>
      </div>
      <div className="flex-1 bg-white pt-1 text-black">
        <div className="flex h-5 items-center pl-[9px]">
          <button aria-label="Collapse root" className="flex h-[11px] w-[11px] items-center justify-center border border-[#999]">
            <span className="h-px w-[7px] bg-[#333a90]" />
          </button>
          <span className="mr-0.5 w-2.5 border-t border-dotted border-[#777]" />
          <svg viewBox="0 0 14 14" className="mb-1 h-[14px] w-[14px]" aria-hidden="true">
            <path d="M1 13L13 1" stroke="#0a6c0a" strokeWidth="2.5" />
          </svg>
        </div>
        <div className="flex h-6 items-center pl-[34px]">
          <button aria-label="Expand Housing" className="flex h-[11px] w-[11px] items-center justify-center border border-[#999]">
            <svg viewBox="0 0 7 7" className="h-[7px] w-[7px]" aria-hidden="true">
              <path d="M0 3.500h7M3.500 0v7" stroke="#333a90" />
            </svg>
          </button>
          <span className="w-3 border-t border-dotted border-[#777]" />
          <label className="relative flex h-[14px] w-[14px] items-center justify-center border-t-2 border-l-2 border-[#777] bg-white">
            <input
              type="checkbox"
              checked={visible}
              onChange={(e) => setVisible(e.target.checked)}
              aria-label="Show Housing"
              className="absolute h-full w-full appearance-none"
            />
            {visible && (
              <svg viewBox="0 0 12 12" className="h-3 w-3" aria-hidden="true">
                <path d="M2 5l3 4 5-6" fill="none" stroke="#000" strokeWidth="2.2" />
              </svg>
            )}
          </label>
          <svg viewBox="0 0 17 17" className="ml-6 h-[17px] w-[17px]" aria-hidden="true">
            <path d="M0 4l5-4h12l-5 4z" fill="#8ae0dc" />
            <path d="M0 4h12v13H0z" fill="#3fb4b0" />
            <path d="M12 4l5-4v12l-5 5z" fill="#20807e" />
          </svg>
          <span className="ml-1.5 border-b-2 border-[#50e850] px-[3px] leading-4 font-bold">Housing</span>
        </div>
      </div>
    </aside>
  );
}

function HousingModel() {
  return (
    <svg viewBox="0 0 1500 1290" className="absolute top-[166px] left-[625px] h-[430px] w-[500px]" role="img" aria-label="Housing">
      <defs>
        <linearGradient id="side" x1="0" y1="0" x2="1" y2="0">
          <stop offset="0" stopColor="#777879" />
          <stop offset="1" stopColor="#6b6b6d" />
        </linearGradient>
        <linearGradient id="barrel" gradientUnits="userSpaceOnUse" x1="1130" y1="130" x2="1330" y2="370">
          <stop offset="0" stopColor="#131313" />
          <stop offset="0.25" stopColor="#1e1e1f" />
          <stop offset="0.65" stopColor="#555557" />
          <stop offset="1" stopColor="#6c6c6f" />
        </linearGradient>
        <linearGradient id="collar" gradientUnits="userSpaceOnUse" x1="430" y1="690" x2="570" y2="890">
          <stop offset="0" stopColor="#131313" />
          <stop offset="0.45" stopColor="#4c4c4d" />
          <stop offset="1" stopColor="#6e6e70" />
        </linearGradient>
      </defs>
      <path d="M485 690L790 478L1278 502L592 970L540 930z" fill="#131313" />
      <path d="M546 1232L1438 618L1430 318L1278 418V502L592 970L588 895L536 930z" fill="url(#side)" />
      <path d="M914 182L1030 98C1075 66 1120 53 1170 53C1310 50 1425 170 1430 318L1278 420L1000 420z" fill="url(#barrel)" />
      <path d="M181 690C220 655 265 635 325 634C480 636 585 760 590 898L538 932L300 760z" fill="url(#collar)" />
      <g stroke="#12c06c" strokeWidth="3.5" fill="none">
        <path d="M1030 98C1075 66 1120 53 1170 53C1310 50 1425 170 1430 318L1438 618L546 1232" />
        <path d="M1278 420L1430 318M538 932L590 898" />
        <path d="M181 690C220 655 265 635 325 634C480 636 585 760 590 898L592 970" />
        <path d="M790 475V360C795 250 885 158 1016 158C1160 158 1270 280 1277 420V502z" fill="#9b9899" />
        <path d="M804 478V360C812 255 900 174 1016 174C1150 175 1258 285 1262 420V500" />
        <path d="M820 478V362C830 265 910 188 1016 188C1140 190 1243 290 1246 415V498" />
        <path d="M60 1208L51 960V885C55 755 155 668 282 668C430 672 530 790 538 930L546 1232z" fill="#9b9899" />
        <path d="M790 478L485 690M804 485L494 698" strokeWidth="5" />
        <path d="M1246 505L592 952M1260 506L592 962" strokeWidth="4.5" />
        <path d="M1275 503L592 972" />
      </g>
      <path d="M796 482L490 694M1268 506L594 968" stroke="#131313" strokeWidth="3" strokeDasharray="12 4" />
    </svg>
  );
}

function Viewport() {
  return (
    <main className="relative flex-1 overflow-hidden border border-[#c8c8c8] border-t-[#999] border-l-[#999]">
      <svg viewBox="0 0 40 50" className="absolute top-[105px] left-[102px] h-[50px] w-10" aria-hidden="true">
        <path d="M11 12l25 25-15 1-9 9z" fill="#ffff00" stroke="#111" strokeWidth="1.5" />
        <path d="M11 0v46M1 11h20" stroke="#000" strokeWidth="1.5" />
      </svg>
      <HousingModel />
    </main>
  );
}

function FitIcon({ className }) {
  return (
    <svg viewBox="0 0 26 26" className={className} aria-hidden="true">
      <rect x="1" y="1" width="24" height="24" fill="#fff" stroke="#1c1cd0" strokeWidth="2" />
      <path d="M13 3l4 4h-3v3h-3V7H9zM13 24l4-4h-3v-4h-3v4H9zM2 13l4-4v3h3v3H6v3zM24 13l-4-4v3h-3v3h3v3z" fill="#22e0f0" />
      <path d="M15 8v3h-3M15 20l-2 3M7 16v2M19 16v2" fill="none" stroke="#5a8a90" />
    </svg>
  );
}

function CommandBar() {
  return (
    <div className="flex h-[45px] items-center pl-[5px]">
      <span className="h-8 w-[3px] border-l-[3px] border-dotted border-[#b4bcc8]" />
      <div className="relative ml-1 w-[438px]">
        <input aria-label="Command" className="block h-7 w-full rounded-sm border border-[#888] bg-white px-2 outline-none" />
        <svg viewBox="0 0 12 8" className="absolute top-[10px] right-1.5 h-2 w-3" aria-hidden="true">
          <path d="M1 1l5 6 5-6" fill="none" stroke="#777" strokeWidth="1.4" />
        </svg>
      </div>
      <div className="flex h-7 items-center gap-0.5 bg-[#f2f2f2] px-px">
        <button aria-label="Enter" className="flex h-[25px] w-8 items-center justify-center rounded bg-[#fafafa]">
          <svg viewBox="0 0 24 16" className="h-4 w-6" aria-hidden="true">
            <path d="M22 1v8H8" fill="none" stroke="#999" strokeWidth="3" />
            <path d="M0 9l10-7v14z" fill="#999" />
          </svg>
        </button>
        <button aria-label="Cancel" className="flex h-[25px] w-[30px] items-center justify-center rounded bg-[#fafafa]">
          <svg viewBox="0 0 16 16" className="h-4 w-4" aria-hidden="true">
            <path d="M1 1c5 4 9 9 12 14M15 1C9 5 5 10 2 15" fill="none" stroke="#999" strokeWidth="2" />
          </svg>
        </button>
      </div>
      <span className="ml-auto h-7 w-[3px] border-l-[3px] border-dotted border-[#b4bcc8]" />
      <button aria-label="Fit view" className="mr-5 ml-2.5">
        <FitIcon className="h-[26px] w-[26px]" />
      </button>
    </div>
  );
}

function StatusBar() {
  return (
    <footer className="flex h-[30px] items-center border-t-2 border-[#999] bg-[#edeff2]">
      <p className="flex-1 pl-[11px]">
        Click a command or preselect assembly, part, workplane, face or edge. Hold SHIFT-key to select multiple items.
      </p>
      <div className="flex h-full items-center border-l border-[#d4d6d8] pl-3">
        <svg viewBox="0 0 20 14" className="h-[14px] w-5" aria-hidden="true">
          <path d="M1 1l4 4M19 1l-4 4M0 7h20M1 13l4-4M19 13l-4-4" stroke="#333" strokeWidth="1.4" />
          <rect x="4" y="3" width="12" height="9" rx="4" fill="#b8b020" stroke="#333" />
          <path d="M7 5h6" stroke="#f8f4a0" strokeWidth="2" />
        </svg>
        <svg viewBox="0 0 20 18" className="ml-3 h-[18px] w-5" aria-hidden="true">
          <path d="M10 1l9 16H1z" fill="#f8e08c" stroke="#d8b850" strokeLinejoin="round" />
          <path d="M10 6v6M10 14v2" stroke="#555" strokeWidth="2" />
        </svg>
        <span className="ml-2 h-6 w-[22px] border border-[#d8dadd] bg-white" />
        <span className="ml-[3px] flex h-6 w-[75px] items-center overflow-hidden border border-[#d8dadd] bg-white pl-[7px] text-[#222]">
          /Housing
        </span>
        <button className="ml-1.5 w-[43px] text-left">Catch</button>
        <button className="ml-[13px] w-[43px] text-left">Units</button>
        <div className="relative ml-1.5 border-l border-[#d4d6d8] pl-[3px]">
          <select aria-label="Selection filter" className="block h-6 w-[140px] appearance-none border border-[#d0d2d4] bg-white pl-0.5 text-[#222]">
            <option>All</option>
          </select>
          <Caret className="absolute top-[9px] right-1.5" />
        </div>
        <button aria-label="Display" className="ml-2">
          <svg viewBox="0 0 18 17" className="h-[17px] w-[18px]" aria-hidden="true">
            <rect x="1" y="1" width="16" height="15" rx="2" fill="#e4ecfa" stroke="#4a6cae" strokeWidth="1.5" />
            <path d="M4 4h10v9H4z" fill="#7c9ee0" stroke="#3d5fa8" />
            <path d="M5 6h8M5 8.500h8M5 11h8" stroke="#c6d8f8" />
          </svg>
        </button>
        <button aria-label="Zoom window" className="ml-3.5">
          <svg viewBox="0 0 20 20" className="h-5 w-5" aria-hidden="true">
            <rect x="1" y="1" width="18" height="18" fill="#fff" stroke="#1c1cd0" strokeWidth="2" />
            <path d="M4 4h10v12H4z" fill="none" stroke="#223" strokeDasharray="2 1" />
            <circle cx="12" cy="11" r="4" fill="#80e0e8" stroke="#208090" />
            <path d="M15 14l3 4" stroke="#207090" strokeWidth="2" />
          </svg>
        </button>
        <button aria-label="Previous view" className="ml-3">
          <svg viewBox="0 0 20 20" className="h-5 w-5" aria-hidden="true">
            <rect x="1" y="1" width="18" height="18" fill="#fff" stroke="#1c1cd0" strokeWidth="2" />
            <path d="M5 10.500l9-5v10z" fill="#10108c" />
          </svg>
        </button>
        <button aria-label="Fit all" className="ml-3">
          <FitIcon className="h-5 w-5" />
        </button>
        <svg viewBox="0 0 20 12" className="mr-1.5 ml-3.5 h-3 w-5" aria-hidden="true">
          <path d="M9 0v12L1 6zM11 0v12l8-6z" fill="#888" />
        </svg>
      </div>
    </footer>
  );
}

export default function App() {
  const [active, setActive] = useState('Modeling');

  return (
    <div className="flex h-screen flex-col bg-[#fcfcfc] font-['Open_Sans','Noto_Sans',sans-serif] text-sm text-[#4a4a4a]">
      <TitleBar />
      <TabBar active={active} onSelect={setActive} />
      <Ribbon />
      <div className="mt-1 flex min-h-0 flex-1 gap-1.5">
        <Sidebar />
        <Viewport />
      </div>
      <CommandBar />
      <StatusBar />
    </div>
  );
}
